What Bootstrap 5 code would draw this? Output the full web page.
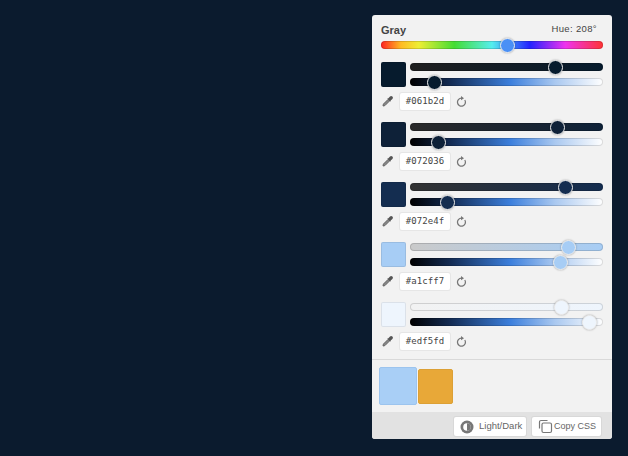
<!DOCTYPE html>
<html lang="en">
<head>
  <meta charset="UTF-8" />
  <meta name="viewport" content="width=device-width, initial-scale=1" />
  <title>Gray palette</title>
  <link href="https://cdn.jsdelivr.net/npm/bootstrap@5.3.0/dist/css/bootstrap.min.css" rel="stylesheet" />
  <style>
  body {
    background: #0b1b2e;
    font-family: "Liberation Sans", Arial, sans-serif;
    height: 456px;
    overflow: hidden;
  }
  .picker-panel {
    width: 240px;
    height: 424px;
    margin: 15px 0 0 372px;
    background: #f2f2f2;
    border-radius: 3px;
    overflow: hidden;
  }
  .picker-head {
    height: 26px;
    padding: 8px 9px 0 9px;
    color: #444;
  }
  .picker-title { font-size: 11px; font-weight: 700; line-height: 14px; }
  .picker-hue { font-size: 9.5px; line-height: 12px; letter-spacing: .35px; color: #444; padding-right: 6px; }
  .hue-wrap { padding: 0 9px; height: 21px; }
  .slide-track {
    position: relative;
    height: 8px;
    border-radius: 4px;
    box-shadow: inset 0 0 0 1px rgba(0,0,0,.14);
  }
  .slide-thumb {
    position: absolute;
    top: 50%;
    width: 15px;
    height: 15px;
    margin: -7.5px 0 0 -7.5px;
    border-radius: 50%;
    border: 1px solid #eee;
    box-shadow: 0 0 2px rgba(0,0,0,.35);
  }
  .hue-track {
    background: linear-gradient(90deg, #f22 0%, #fb2 9%, #ee3 17%, #4d3 33%, #5ee 50%, #2222ff 67%, #e3e 83%, #f33 100%);
  }
  .color-row { height: 60px; padding: 0 9px; }
  .color-row:last-child { height: 57px; }
  .color-swatch {
    width: 24.5px;
    height: 24.5px;
    border-radius: 2px;
    box-shadow: inset 0 0 0 1px rgba(0,0,0,.08);
    flex: none;
  }
  .track-stack { gap: 7px; padding-top: 1px; margin-left: 4px; }
  .light-track { background: linear-gradient(90deg, #000 0%, #12294f 20%, #3c7fdc 52%, #a9c8f0 75%, #fff 100%); }
  .tool-line { height: 18px; margin-top: 6px; }
  .hex-field {
    width: 50px;
    height: 17px;
    margin: 0 6px 0 6px;
    background: #fff;
    border-radius: 2px;
    box-shadow: 0 0 0 1px #e6e6e6;
    font-family: "DejaVu Sans Mono", "Liberation Mono", monospace;
    font-size: 9px;
    line-height: 17px;
    letter-spacing: .1px;
    text-align: center;
    color: #444;
  }
  .tool-icon { fill: none; stroke: #777; }
  .tile-area { height: 53px; border-top: 1px solid #d9d9d9; padding-left: 7px; }
  .tile-big { width: 38px; height: 38px; background: #a9cff6; border: 1px solid #9cc4ee; border-radius: 2px; }
  .tile-small { width: 35px; height: 35px; margin-left: 1px; background: #e8a838; border: 1px solid #dca035; border-radius: 2px; }
  .picker-foot { height: 27px; background: #e2e2e2; padding: 5px 11px 0 0; gap: 6px; }
  .foot-btn {
    height: 19px;
    background: #fff;
    border: 0;
    border-radius: 2px;
    padding: 0 0 0 6px;
    font-size: 9.5px;
    color: #666;
    white-space: nowrap;
    box-shadow: 0 0 0 1px #d8d8d8;
  }
  .btn-contrast { width: 72px; gap: 5px; }
  .btn-copy { width: 69px; gap: 1px; font-size: 9px; }
  </style>
</head>
<body>
<div class="picker-panel d-flex flex-column">
  <div class="picker-head d-flex justify-content-between align-items-start">
    <span class="picker-title">Gray</span>
    <span class="picker-hue">Hue: 208°</span>
  </div>
  <div class="hue-wrap">
    <div class="slide-track hue-track">
      <div class="slide-thumb" style="left: 57.2%; background: #4a90f5;"></div>
    </div>
  </div>
  <div id="rowList"></div>
  <div class="tile-area d-flex align-items-center">
    <div class="tile-big"></div>
    <div class="tile-small"></div>
  </div>
  <div class="picker-foot d-flex justify-content-end">
    <button class="foot-btn btn-contrast d-flex align-items-center" type="button">
      <svg width="14" height="14" viewBox="0 0 14 14"><circle cx="7" cy="7" r="6.500" fill="#777"/><circle cx="7" cy="7" r="3.800" fill="#fff"/><path d="M7 3.200a3.800 3.800 0 0 1 0 7.600z" fill="#777"/></svg>
      <span>Light/Dark</span>
    </button>
    <button class="foot-btn btn-copy d-flex align-items-center" type="button">
      <svg width="15" height="15" viewBox="0 0 15 15" fill="none" stroke="#777" stroke-width="1.200"><path d="M9.500 1.500H3A1.500 1.500 0 0 0 1.500 3v6.500"/><rect x="4" y="4" width="9.500" height="9.500" rx="1.500"/></svg>
      <span>Copy CSS</span>
    </button>
  </div>
</div>

<script>
  // hex label, swatch colour, base of the first track, thumb positions in px on a 194px track
  const rows = [
    { hex: '#061b2d', color: '#061b2d', from: '#1f1f1f', a: 146, b: 25 },
    { hex: '#072036', color: '#0e2138', from: '#2a2a2a', a: 148, b: 29 },
    { hex: '#072e4f', color: '#142d50', from: '#333333', a: 156, b: 38 },
    { hex: '#a1cff7', color: '#a7cdf5', from: '#cacaca', a: 159, b: 151 },
    { hex: '#edf5fd', color: '#eef5fd', from: '#f2f2f2', a: 152, b: 180 }
  ];
  const rowList = document.getElementById('rowList');
  rows.forEach(r => {
    const div = document.createElement('div');
    div.className = 'color-row';
    div.innerHTML = `
      <div class="d-flex">
        <div class="color-swatch" style="background: ${r.color};"></div>
        <div class="track-stack d-flex flex-column flex-grow-1">
          <div class="slide-track" style="background: linear-gradient(90deg, ${r.from}, ${r.color});">
            <div class="slide-thumb" style="left: ${r.a}px; background: ${r.color};"></div>
          </div>
          <div class="slide-track light-track">
            <div class="slide-thumb" style="left: ${r.b}px; background: ${r.color};"></div>
          </div>
        </div>
      </div>
      <div class="tool-line d-flex align-items-center">
        <svg width="13" height="13" viewBox="0 0 13 13"><path d="M2 11l.4-1.900 4.800-4.800 1.500 1.500-4.800 4.800z" fill="#888" stroke="#666" stroke-width="1"/><path d="M6.200 3.600l1.200-.3 1.600-1.700a1.400 1.400 0 0 1 2.400 2.400L9.700 5.600l-.3 1.200z" fill="#555"/></svg>
        <div class="hex-field">${r.hex}</div>
        <svg class="tool-icon" width="11" height="12" viewBox="0 0 11 12"><path d="M8.800 4a4 4 0 1 1-3.300-1.800" stroke-width="1.300"/><path d="M5 0l3 2.200-3 2z" fill="#777" stroke="none"/></svg>
      </div>`;
    rowList.appendChild(div);
  });
</script>
<script src="https://cdn.jsdelivr.net/npm/bootstrap@5.3.0/dist/js/bootstrap.bundle.min.js"></script>
</body>
</html>
